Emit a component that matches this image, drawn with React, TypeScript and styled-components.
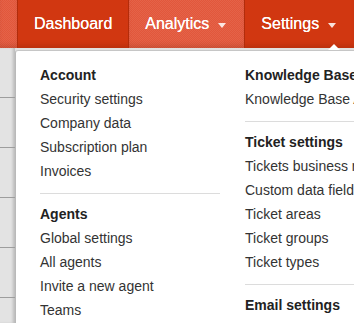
import React from 'react';
import styled, { createGlobalStyle, css } from 'styled-components';

const GlobalStyle = createGlobalStyle`
  html, body {
    margin: 0;
    padding: 0;
    overflow: hidden;
    background: #e1e1e1;
    font-family: "Liberation Sans", Arial, sans-serif;
  }
`;

type Column = { title: string; items: string[] }[];

const leftColumn: Column = [
  { title: 'Account', items: ['Security settings', 'Company data', 'Subscription plan', 'Invoices'] },
  { title: 'Agents', items: ['Global settings', 'All agents', 'Invite a new agent', 'Teams'] },
];

const rightColumn: Column = [
  { title: 'Knowledge Base', items: ['Knowledge Base Articles'] },
  {
    title: 'Ticket settings',
    items: ['Tickets business rules', 'Custom data fields', 'Ticket areas', 'Ticket groups', 'Ticket types'],
  },
  { title: 'Email settings', items: ['Email addresses'] },
];

const textured = css`
  background-color: #e2573b;
  background-image: repeating-conic-gradient(rgba(255, 255, 255, 0.07) 0 25%, transparent 0 50%);
  background-size: 2px 2px;
`;

const App: React.FC = () => {
  return (
    <Page>
      <GlobalStyle />
      <NavBar>
        <NavSpacer />
        <Tab>Dashboard</Tab>
        <Tab $hover>
          Analytics
          <Caret />
        </Tab>
        <Tab $open>
          Settings
          <Caret />
          <Notch />
        </Tab>
      </NavBar>
      <Body>
        <Strip>
          <StripRow />
          <StripRow />
          <StripRow />
          <StripRow />
          <StripRow />
        </Strip>
        <Dropdown>
          <MenuColumn groups={leftColumn} />
          <MenuColumn groups={rightColumn} />
        </Dropdown>
      </Body>
    </Page>
  );
};

const MenuColumn: React.FC<{ groups: Column }> = ({ groups }) => (
  <Col>
    {groups.map((g, i) => (
      <React.Fragment key={g.title}>
        {i > 0 && <Divider />}
        <GroupTitle>{g.title}</GroupTitle>
        {g.items.map((item) => (
          <Item key={item}>{item}</Item>
        ))}
      </React.Fragment>
    ))}
  </Col>
);

const Page = styled.div`
  width: 354px;
  height: 323px;
  position: relative;
  overflow: hidden;
`;

const NavBar = styled.div`
  display: flex;
  height: 48px;
  background: #d13711;
  box-shadow: inset 0 -5px 5px -2px rgba(90, 20, 0, 0.18);
`;

const NavSpacer = styled.div`
  width: 17px;
  flex-shrink: 0;
  ${textured};
  box-shadow: inset 0 -5px 5px -2px rgba(90, 20, 0, 0.18);
`;

const Tab = styled.div<{ $hover?: boolean; $open?: boolean }>`
  position: relative;
  display: flex;
  align-items: center;
  flex-shrink: 0;
  padding: 0 16px;
  height: 48px;
  border-left: 1px solid #b22c0b;
  color: #fff;
  font-size: 16px;
  line-height: 48px;
  white-space: nowrap;
  text-shadow: 0 0 0.4px #fff;
  ${(p) =>
    p.$hover &&
    css`
      ${textured};
      padding-right: 18px;
      box-shadow: inset 0 -5px 5px -2px rgba(90, 20, 0, 0.18);
    `}
  ${(p) =>
    p.$open &&
    css`
      padding-left: 16px;
    `}
`;

const Caret = styled.span`
  display: inline-block;
  margin-left: 9px;
  margin-top: 2px;
  width: 0;
  height: 0;
  border-left: 4.5px solid transparent;
  border-right: 4.5px solid transparent;
  border-top: 5px solid rgba(255, 255, 255, 0.85);
`;

const Notch = styled.span`
  position: absolute;
  right: 12px;
  bottom: -2px;
  width: 0;
  height: 0;
  border-left: 6px solid transparent;
  border-right: 6px solid transparent;
  border-bottom: 6px solid #fff;
  z-index: 2;
`;

const Body = styled.div`
  position: relative;
  height: 275px;
`;

const Strip = styled.div`
  width: 15px;
  height: 100%;
  display: flex;
  flex-direction: column;
  background: #e3e3e3;
  box-shadow: inset -3px 0 3px -1px rgba(0, 0, 0, 0.18);
`;

const StripRow = styled.div`
  height: 49px;
  flex-shrink: 0;
  border-bottom: 1px solid #9d9d9d;
`;

const Dropdown = styled.div`
  position: absolute;
  top: 2px;
  left: 15px;
  width: 420px;
  height: 300px;
  box-sizing: border-box;
  padding: 13px 0 0 24px;
  background: #fff;
  border-top: 1px solid #c6c6c6;
  border-left: 1px solid #b9b9b9;
  border-top-left-radius: 3px;
  display: grid;
  grid-template-columns: 180px 180px;
  column-gap: 25px;
  align-content: start;
`;

const Col = styled.div`
  display: flex;
  flex-direction: column;
`;

const GroupTitle = styled.div`
  font-size: 14px;
  font-weight: bold;
  line-height: 23px;
  color: #222;
  white-space: nowrap;
`;

const Item = styled.div`
  font-size: 14px;
  line-height: 24px;
  color: #333;
  white-space: nowrap;
`;

const Divider = styled.div`
  height: 1px;
  background: #dcdcdc;
  margin: 10px 0 9px;
`;

export default App;
